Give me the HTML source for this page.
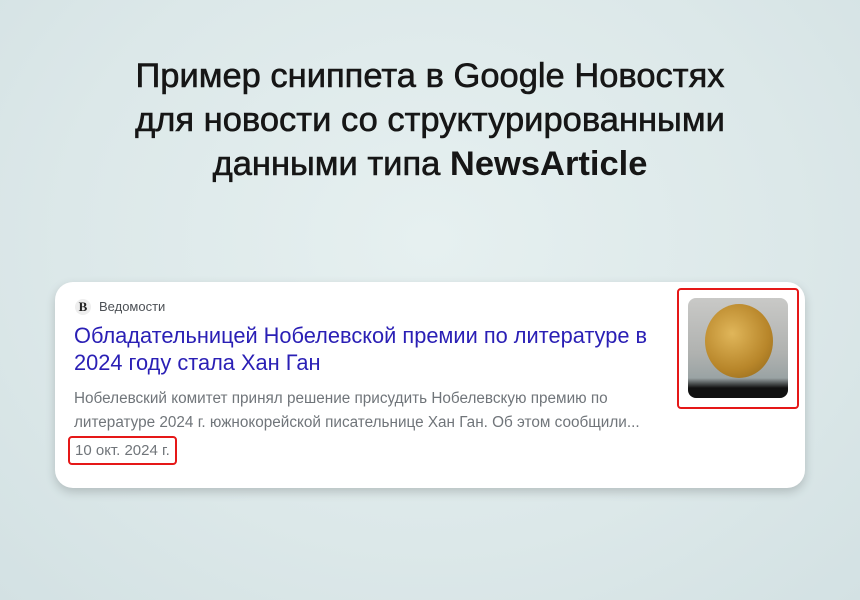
<!DOCTYPE html>
<html><head><meta charset="utf-8"><style>
*{margin:0;padding:0;box-sizing:border-box}
body{width:860px;height:600px;overflow:hidden;background:radial-gradient(ellipse at 50% 40%,#e6f0f0 0%,#dce8e9 60%,#d3e1e3 100%);font-family:"Liberation Sans",sans-serif;position:relative}
h1{position:absolute;top:54px;left:0;width:860px;text-align:center;font-size:34.5px;line-height:44px;font-weight:400;-webkit-text-stroke:0.6px #161616;color:#161616;letter-spacing:0}
.card{position:absolute;left:55px;top:282px;width:750px;height:206px;background:#fff;border-radius:18px;box-shadow:0 4px 10px rgba(0,0,0,0.18)}
.src{position:absolute;left:20px;top:17px;font-size:13px;color:#4d5156}
.src b{display:inline-block;width:16px;height:16px;border-radius:50%;background:#eee;color:#222;font-family:"Liberation Serif",serif;font-size:13px;text-align:center;line-height:16px;margin-right:8px}
.t{position:absolute;left:19px;top:40px;width:590px;font-size:21.8px;line-height:27px;color:#2a1fb5}
.s{position:absolute;left:19px;top:105px;width:590px;font-size:15.3px;line-height:24px;color:#70757a}
.d{position:absolute;left:20px;top:160px;font-size:15px;color:#70757a}
.r1{position:absolute;left:13px;top:154px;width:109px;height:29px;border:2px solid #e51818;border-radius:4px}
.r2{position:absolute;left:622px;top:6px;width:122px;height:121px;border:2px solid #e51818;border-radius:4px}
.img{position:absolute;left:633px;top:16px;width:100px;height:100px;border-radius:8px;overflow:hidden;background:linear-gradient(#c9c9c7 0%,#b0b2b0 55%,#9aa3a4 80%,#111 90%,#111 100%)}
.med{position:absolute;left:17px;top:6px;width:68px;height:74px;border-radius:50%;background:radial-gradient(circle at 40% 40%,#e0b65a,#b8862a 60%,#8a6218)}
</style></head><body>
<h1>Пример сниппета в Google Новостях<br>для новости со структурированными<br>данными типа <b style="font-weight:700;-webkit-text-stroke:0">NewsArticle</b></h1>
<div class="card">
<div class="src"><b>B</b>Ведомости</div>
<div class="t">Обладательницей Нобелевской премии по литературе в 2024 году стала Хан Ган</div>
<div class="s">Нобелевский комитет принял решение присудить Нобелевскую премию по литературе 2024 г. южнокорейской писательнице Хан Ган. Об этом сообщили...</div>
<div class="d">10 окт. 2024 г.</div>
<div class="r1"></div>
<div class="r2"></div>
<div class="img"><div class="med"></div></div>
</div>
</body></html>
